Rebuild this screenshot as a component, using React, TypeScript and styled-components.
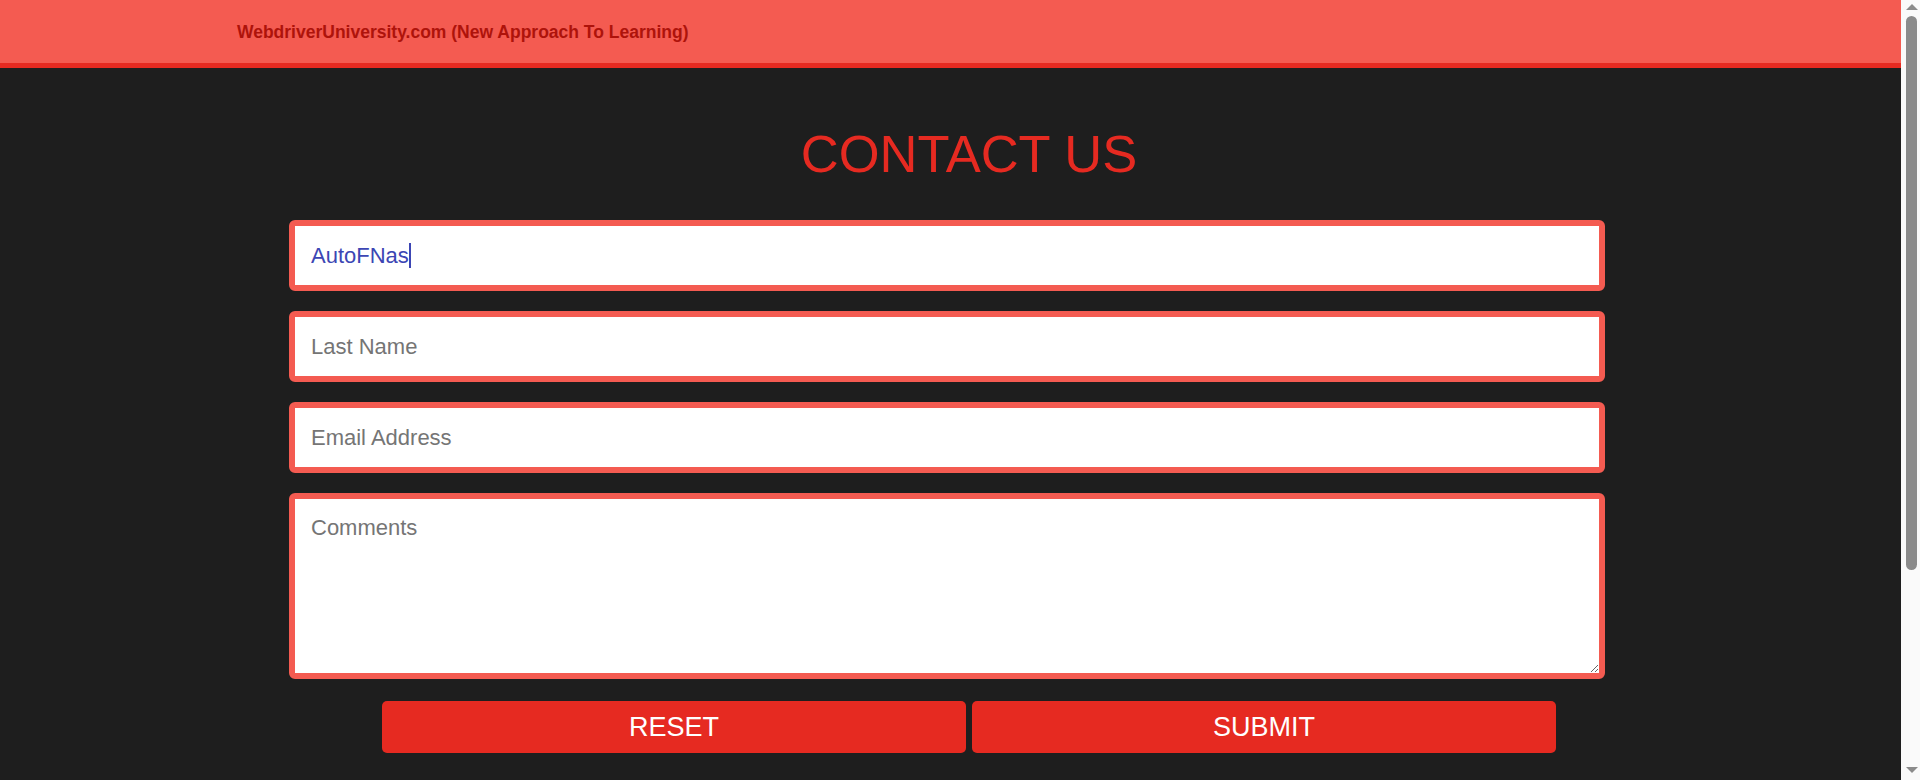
import React from "react";
import styled, { createGlobalStyle } from "styled-components";

const GlobalStyle = createGlobalStyle`
  html, body {
    margin: 0;
    padding: 0;
    background: #1e1e1e;
    font-family: "Liberation Sans", Arial, sans-serif;
  }
  * { box-sizing: border-box; }
`;

const Header = styled.header`
  height: 68px;
  background: #f45b51;
  border-bottom: 5px solid #e62a21;
  display: flex;
  align-items: center;
  padding-left: 237px;
`;

const HeaderTitle = styled.span`
  font-size: 17.5px;
  font-weight: bold;
  color: #ae130b;
  line-height: 20px;
  padding-top: 1px;
`;

const Main = styled.main`
  width: 1360px;
  margin-left: 289px;
  padding-bottom: 40px;
  display: flex;
  flex-direction: column;
`;

const Title = styled.h1`
  margin: 56px 0 36px;
  font-size: 52.5px;
  line-height: 60px;
  font-weight: normal;
  color: #e62a21;
  text-align: center;
`;

const Form = styled.form`
  width: 1316px;
  display: flex;
  flex-direction: column;
  gap: 20px;
`;

const fieldBase = `
  width: 100%;
  border: 6px solid #f45b51;
  border-radius: 6px;
  background: #fff;
  font-family: "Liberation Sans", Arial, sans-serif;
  font-size: 22px;
  color: #3c46b4;
  outline: none;
  &::placeholder { color: #757575; }
`;

const FieldWrap = styled.div`
  position: relative;
`;

const Input = styled.input`
  ${fieldBase}
  height: 71px;
  padding: 0 16px;
  display: block;
`;

const CaretOverlay = styled.div`
  position: absolute;
  inset: 6px;
  padding: 0 16px;
  display: flex;
  align-items: center;
  pointer-events: none;
  font-size: 22px;
`;

const Ghost = styled.span`
  color: transparent;
`;

const Caret = styled.span`
  display: inline-block;
  width: 2px;
  height: 25px;
  background: #3c46b4;
`;

const TextArea = styled.textarea`
  ${fieldBase}
  height: 186px;
  padding: 16px 16px 15px;
  display: block;
  resize: both;
`;

const ButtonRow = styled.div`
  margin-top: 22px;
  display: flex;
  justify-content: center;
  gap: 6px;
`;

const Button = styled.button`
  width: 584px;
  height: 52px;
  border: none;
  border-radius: 5px;
  background: #e62a21;
  color: #fff;
  font-family: "Liberation Sans", Arial, sans-serif;
  font-size: 27px;
  cursor: pointer;
`;

/* Window scrollbar drawn over the right edge of the page */
const ScrollBar = styled.div`
  position: fixed;
  top: 0;
  right: 0;
  width: 19px;
  height: 100vh;
  background: #fafafa;
  display: flex;
  flex-direction: column;
  align-items: center;
  padding: 4px 0 7px 2px;
  z-index: 10;
`;

const Arrow = styled.div<{ $dir: "up" | "down" }>`
  width: 0;
  height: 0;
  border-left: 6px solid transparent;
  border-right: 6px solid transparent;
  ${(p) =>
    p.$dir === "up"
      ? "border-bottom: 6px solid #8b8b8b;"
      : "border-top: 6px solid #8b8b8b;"}
`;

const Thumb = styled.div`
  margin-top: 6px;
  width: 11px;
  height: 554px;
  border-radius: 6px;
  background: #8b8b8b;
`;

const Track = styled.div`
  flex: 1;
`;

export default function App() {
  return (
    <>
      <GlobalStyle />
      <Header>
        <HeaderTitle>WebdriverUniversity.com (New Approach To Learning)</HeaderTitle>
      </Header>
      <Main>
        <Title>CONTACT US</Title>
        <Form onSubmit={(e) => e.preventDefault()}>
          <FieldWrap>
            <Input type="text" name="first_name" placeholder="First Name" defaultValue="AutoFNas" />
            <CaretOverlay>
              <Ghost>AutoFNas</Ghost>
              <Caret />
            </CaretOverlay>
          </FieldWrap>
          <Input type="text" name="last_name" placeholder="Last Name" />
          <Input type="text" name="email" placeholder="Email Address" />
          <TextArea name="message" placeholder="Comments" />
        </Form>
        <ButtonRow>
          <Button type="reset">RESET</Button>
          <Button type="submit">SUBMIT</Button>
        </ButtonRow>
      </Main>
      <ScrollBar aria-hidden="true">
        <Arrow $dir="up" />
        <Thumb />
        <Track />
        <Arrow $dir="down" />
      </ScrollBar>
    </>
  );
}
